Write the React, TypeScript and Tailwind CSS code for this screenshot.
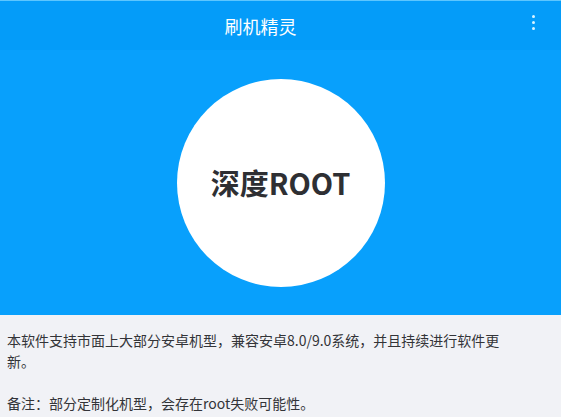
export default function App() {
  return (
    <div className="flex h-[417px] w-[561px] flex-col overflow-hidden bg-[#f1f2f6] font-['Noto_Sans_CJK_SC',sans-serif]">
      <header className="relative flex h-[50px] shrink-0 items-center justify-center border-t border-[#5cc6ff] bg-[#049cf9] pr-[40px]">
        <h1 className="text-[18px] leading-none text-white">刷机精灵</h1>
        <div className="absolute right-[26px] top-[14px] flex flex-col gap-[3px]">
          <span className="h-[3px] w-[3px] rounded-full bg-[#d8f3ff]" />
          <span className="h-[3px] w-[3px] rounded-full bg-[#d8f3ff]" />
          <span className="h-[3px] w-[3px] rounded-full bg-[#d8f3ff]" />
        </div>
      </header>
      <section className="flex h-[265px] shrink-0 items-center justify-center bg-[#08a0fc]">
        <div className="flex h-[208px] w-[208px] items-center justify-center rounded-full bg-white">
          <span className="text-[29px] font-bold leading-none text-[#2e2f33]">深度ROOT</span>
        </div>
      </section>
      <div className="pl-[7px] pr-[48px] pt-[15px] text-[14px] leading-[21px] text-[#333438]">
        <p>本软件支持市面上大部分安卓机型，兼容安卓8.0/9.0系统，并且持续进行软件更新。</p>
        <p className="mt-[21px]">备注：部分定制化机型，会存在root失败可能性。</p>
      </div>
    </div>
  );
}
